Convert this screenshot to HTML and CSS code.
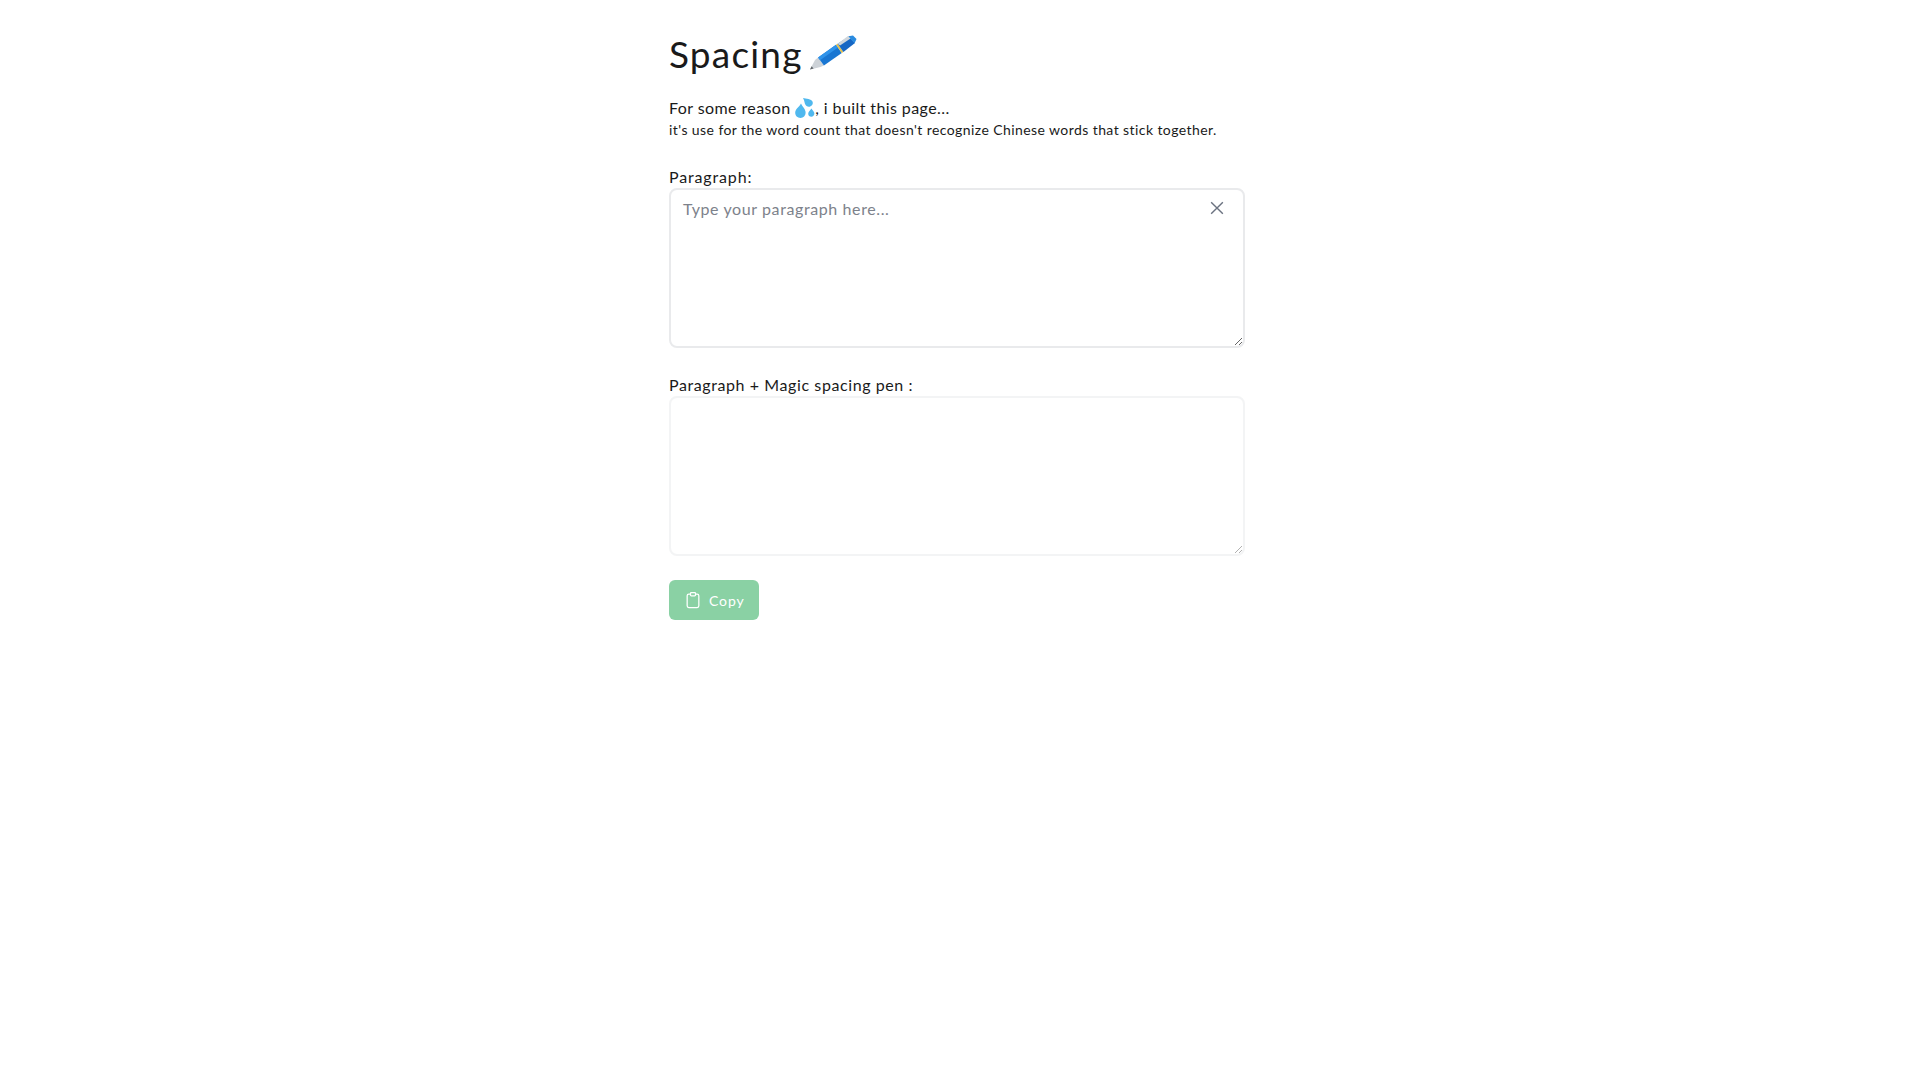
FILE: index.html
```html
<!DOCTYPE html>
<html lang="en">
<head>
  <meta charset="UTF-8">
  <meta name="viewport" content="width=device-width, initial-scale=1.0">
  <title>Spacing</title>
  <link rel="stylesheet" href="styles.css">
</head>
<body>

  <div class="container">
    <h1 class="title"><span class="title-text">Spacing</span>
      <svg class="pen" viewBox="0 0 48 36" aria-hidden="true">
        <path d="M1 34.5 L6 25 L9.1 22.4 L14.9 30.6 L11.5 32 Z" fill="#cdd2d7"/>
        <path d="M1 34.5 L2.6 31.3 L4.6 33.6 Z" fill="#5f6468"/>
        <path d="M9.1 22.4 L27 9.8 L32.8 18 L14.9 30.6 Z" fill="#1976d2"/>
        <path d="M9.1 22.4 L27 9.8 L29 12.6 L11 25.2 Z" fill="#2f93ea"/>
        <path d="M27 9.8 L28.6 8.7 L34.4 16.9 L32.8 18 Z" fill="#e6c14a"/>
        <path d="M28.6 8.7 L40 1.5 L46 8 L34.4 16.9 Z" fill="#1667c4"/>
        <path d="M28.6 8.7 L39 1 L43 2.4 L31 10.4 Z" fill="#cfd6dc"/>
        <path d="M39.5 1.2 L44 0.6 L47.5 4 L45.6 8.2 L42 4.6 Z" fill="#2a8be0"/>
      </svg>
    </h1>

    <p class="intro">For some reason
      <svg class="drops" viewBox="0 0 20 20" aria-hidden="true">
        <path d="M6 5.5 C7.6 9 10.6 11 10.6 14.6 C10.6 17.8 8.4 20 5.5 20 C2.4 20 0.2 17.8 0.2 14.8 C0.2 11 4.2 9 6 5.5 Z" fill="#4fb8ee"/>
        <path d="M8 0 C11 1.2 16.4 0.4 17.6 3.8 C18.4 6.4 16.4 8.8 13.8 8.8 C11 8.8 10 6.4 9.6 4.6 C9.4 3 8.8 1.4 8 0 Z" fill="#4fb8ee"/>
        <path d="M16.4 10.4 C17.4 12.2 19.4 13.4 19.4 15.6 C19.4 17.4 18 18.8 16.3 18.8 C14.6 18.8 13.2 17.4 13.2 15.7 C13.2 13.6 15.4 12.2 16.4 10.4 Z" fill="#4fb8ee"/>
      </svg>, i built this page...</p>
    <p class="note">it's use for the word count that doesn't recognize Chinese words that stick together.</p>

    <label class="field-label first" for="paragraph">Paragraph:</label>
    <div class="input-wrap">
      <textarea id="paragraph" class="text-box" placeholder="Type your paragraph here..."></textarea>
      <button class="clear-button" aria-label="Clear">
        <svg viewBox="0 0 24 24"><path d="M5 5 L19 19 M19 5 L5 19"/></svg>
      </button>
    </div>

    <label class="field-label second" for="result">Paragraph + Magic spacing pen :</label>
    <textarea id="result" class="text-box disabled" disabled></textarea>

    <button class="copy-button" disabled>
      <svg viewBox="0 0 24 24"><path d="M9 5 H7 a2 2 0 0 0 -2 2 V19 a2 2 0 0 0 2 2 H17 a2 2 0 0 0 2 -2 V7 a2 2 0 0 0 -2 -2 H15"/><rect x="9" y="3" width="6" height="4" rx="1"/></svg>
      Copy
    </button>
  </div>

</body>
</html>
```

FILE: styles.css
```css
* {
  box-sizing: border-box;
}
body {
  margin: 0;
  padding-right: 6px;
  background-color: #ffffff;
  color: #1a1a1a;
  font-family: "Lato", "Open Sans", sans-serif;
}
.container {
  width: 576px;
  margin: 0 auto;
  padding-top: 32px;
}
.title {
  display: flex;
  align-items: center;
  gap: 6px;
  margin: 0;
  height: 42px;
  font-size: 37px;
  font-weight: 400;
}
.title-text {
  letter-spacing: 1.2px;
}
.pen {
  width: 48px;
  height: 36px;
}
.intro {
  margin: 22px 0 0;
  height: 26px;
  font-size: 16px;
  line-height: 24px;
  letter-spacing: 0.41px;
}
.drops {
  width: 20px;
  height: 20px;
  vertical-align: -4px;
}
.note {
  margin: 0;
  height: 20px;
  font-size: 14px;
  line-height: 16px;
  letter-spacing: 0.42px;
}
.field-label {
  display: block;
  height: 24px;
  font-size: 16px;
  line-height: 25px;
}
.field-label.first {
  margin-top: 22px;
  letter-spacing: 0.85px;
}
.field-label.second {
  margin-top: 24px;
  letter-spacing: 0.59px;
}
.input-wrap {
  position: relative;
  height: 160px;
}
.text-box {
  display: block;
  width: 100%;
  height: 160px;
  padding: 7px 12px;
  border: 2px solid #e9eaec;
  border-radius: 8px;
  background-color: #ffffff;
  font-family: inherit;
  font-size: 16px;
  line-height: 24px;
  letter-spacing: 0.6px;
}
.text-box::placeholder {
  color: #7d828b;
}
.text-box.disabled {
  opacity: 0.5;
}
.clear-button {
  position: absolute;
  top: 8px;
  right: 16px;
  width: 24px;
  height: 24px;
  padding: 2px;
  border: none;
  background: transparent;
}
.clear-button svg {
  display: block;
  width: 20px;
  height: 20px;
  fill: none;
  stroke: #6b7280;
  stroke-width: 1.7;
}
.copy-button {
  display: flex;
  align-items: center;
  gap: 6px;
  width: 90px;
  margin-top: 24px;
  height: 40px;
  padding: 0 0 0 14px;
  border: none;
  border-radius: 6px;
  background-color: #8ad1a4;
  color: #ffffff;
  font-family: inherit;
  font-size: 14px;
  letter-spacing: 0.9px;
}
.copy-button svg {
  width: 20px;
  height: 20px;
  fill: none;
  stroke: #ffffff;
  stroke-width: 1.5;
}
```
